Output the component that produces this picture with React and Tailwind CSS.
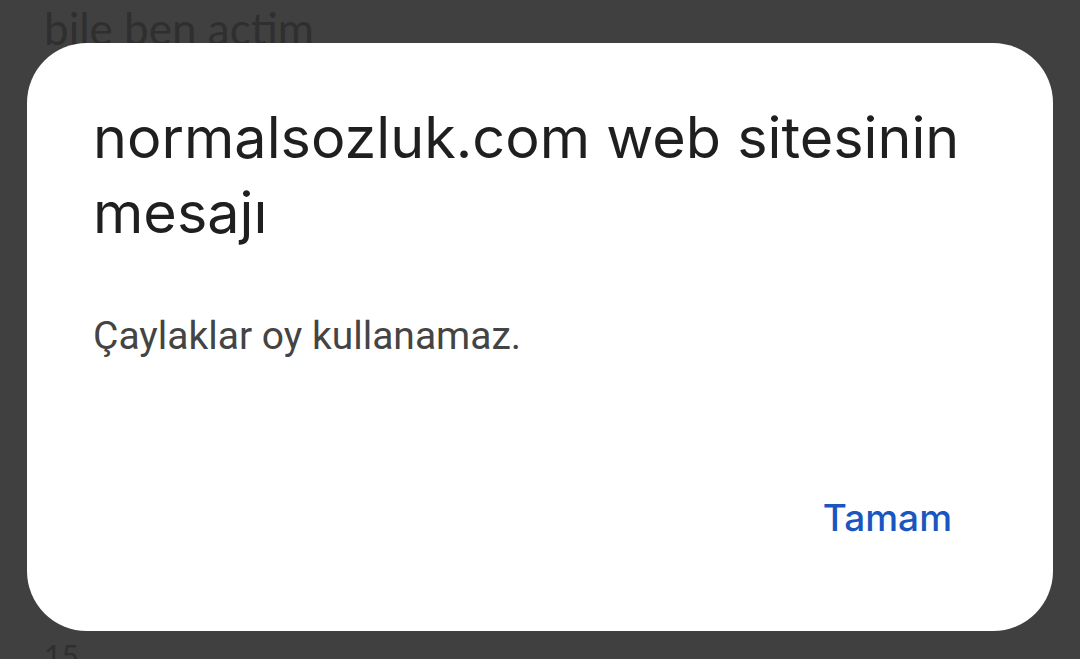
export default function App() {
  return (
    <div className="relative h-[659px] w-[1080px] overflow-hidden bg-[#404040]">
      <div className="flex h-full flex-col justify-between px-[44px] text-[#2f2f2f]" style={{ fontFamily: "Lato, 'Open Sans', sans-serif" }}>
        <div className="mt-[4px] text-[44px] leading-[48px]">bile ben actim</div>
        <div className="mb-[-14px] text-[30px] leading-[36px]">15</div>
      </div>
      <div className="absolute left-[27px] top-[43px] flex h-[588px] w-[1026px] flex-col rounded-[60px] bg-white px-[66px]">
        <h1 className="mt-[57px] text-[57.5px] leading-[75px] text-[#1f1f1f]" style={{ fontFamily: "Inter, 'Open Sans', sans-serif" }}>
          normalsozluk.com web sitesinin mesajı
        </h1>
        <p className="mt-[62px] text-[39px] leading-[48px] text-[#444444]" style={{ fontFamily: "Roboto, sans-serif" }}>
          Çaylaklar oy kullanamaz.
        </p>
        <div className="mt-auto mb-[93px] mr-[35px] flex justify-end">
          <button className="text-[37px] font-medium leading-[40px] text-[#1a56c0]" style={{ fontFamily: "Inter, 'Open Sans', sans-serif" }}>
            Tamam
          </button>
        </div>
      </div>
    </div>
  );
}
